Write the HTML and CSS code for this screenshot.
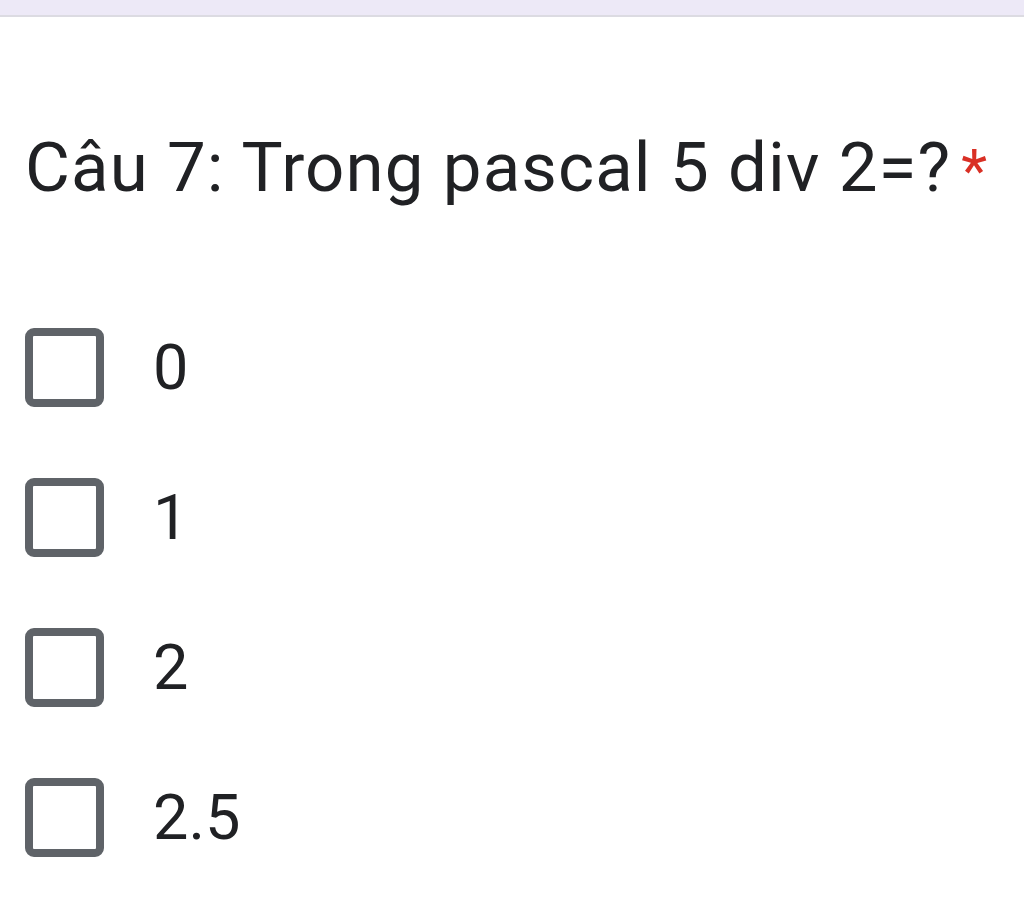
FILE: index.html
```html
<!DOCTYPE html>
<html lang="vi">
<head>
<meta charset="utf-8">
<link rel="stylesheet" href="styles.css">
</head>
<body>
<div class="topbar"></div>
<main class="question">
  <div class="title">Câu 7: Trong pascal 5 div 2=?<span class="req">*</span></div>
  <div class="options">
    <div class="option"><span class="box"></span><span class="label">0</span></div>
    <div class="option"><span class="box"></span><span class="label">1</span></div>
    <div class="option"><span class="box"></span><span class="label">2</span></div>
    <div class="option"><span class="box"></span><span class="label">2.5</span></div>
  </div>
</main>
</body>
</html>
```
FILE: styles.css
```css
html, body {
  margin: 0;
  padding: 0;
  background: #ffffff;
}
.topbar {
  height: 15px;
  background: #ede9f7;
  border-bottom: 2px solid #dcdbe2;
}
.question {
  padding: 0 0 0 25px;
}
.title {
  margin-top: 106px;
  font-family: Roboto, sans-serif;
  font-size: 69px;
  letter-spacing: 1.1px;
  line-height: 90px;
  color: #202124;
  white-space: nowrap;
}
.req {
  margin-left: 10px;
  font-size: 60px;
  letter-spacing: 0;
  color: #d93025;
}
.options {
  margin-top: 112px;
  display: flex;
  flex-direction: column;
  gap: 71px;
}
.option {
  display: flex;
  align-items: center;
  height: 79px;
}
.box {
  box-sizing: border-box;
  width: 79px;
  height: 79px;
  border: 8px solid #5f6368;
  border-radius: 9px;
  flex: none;
}
.label {
  margin-left: 49px;
  font-family: Roboto, sans-serif;
  font-size: 63px;
  color: #202124;
}
```
